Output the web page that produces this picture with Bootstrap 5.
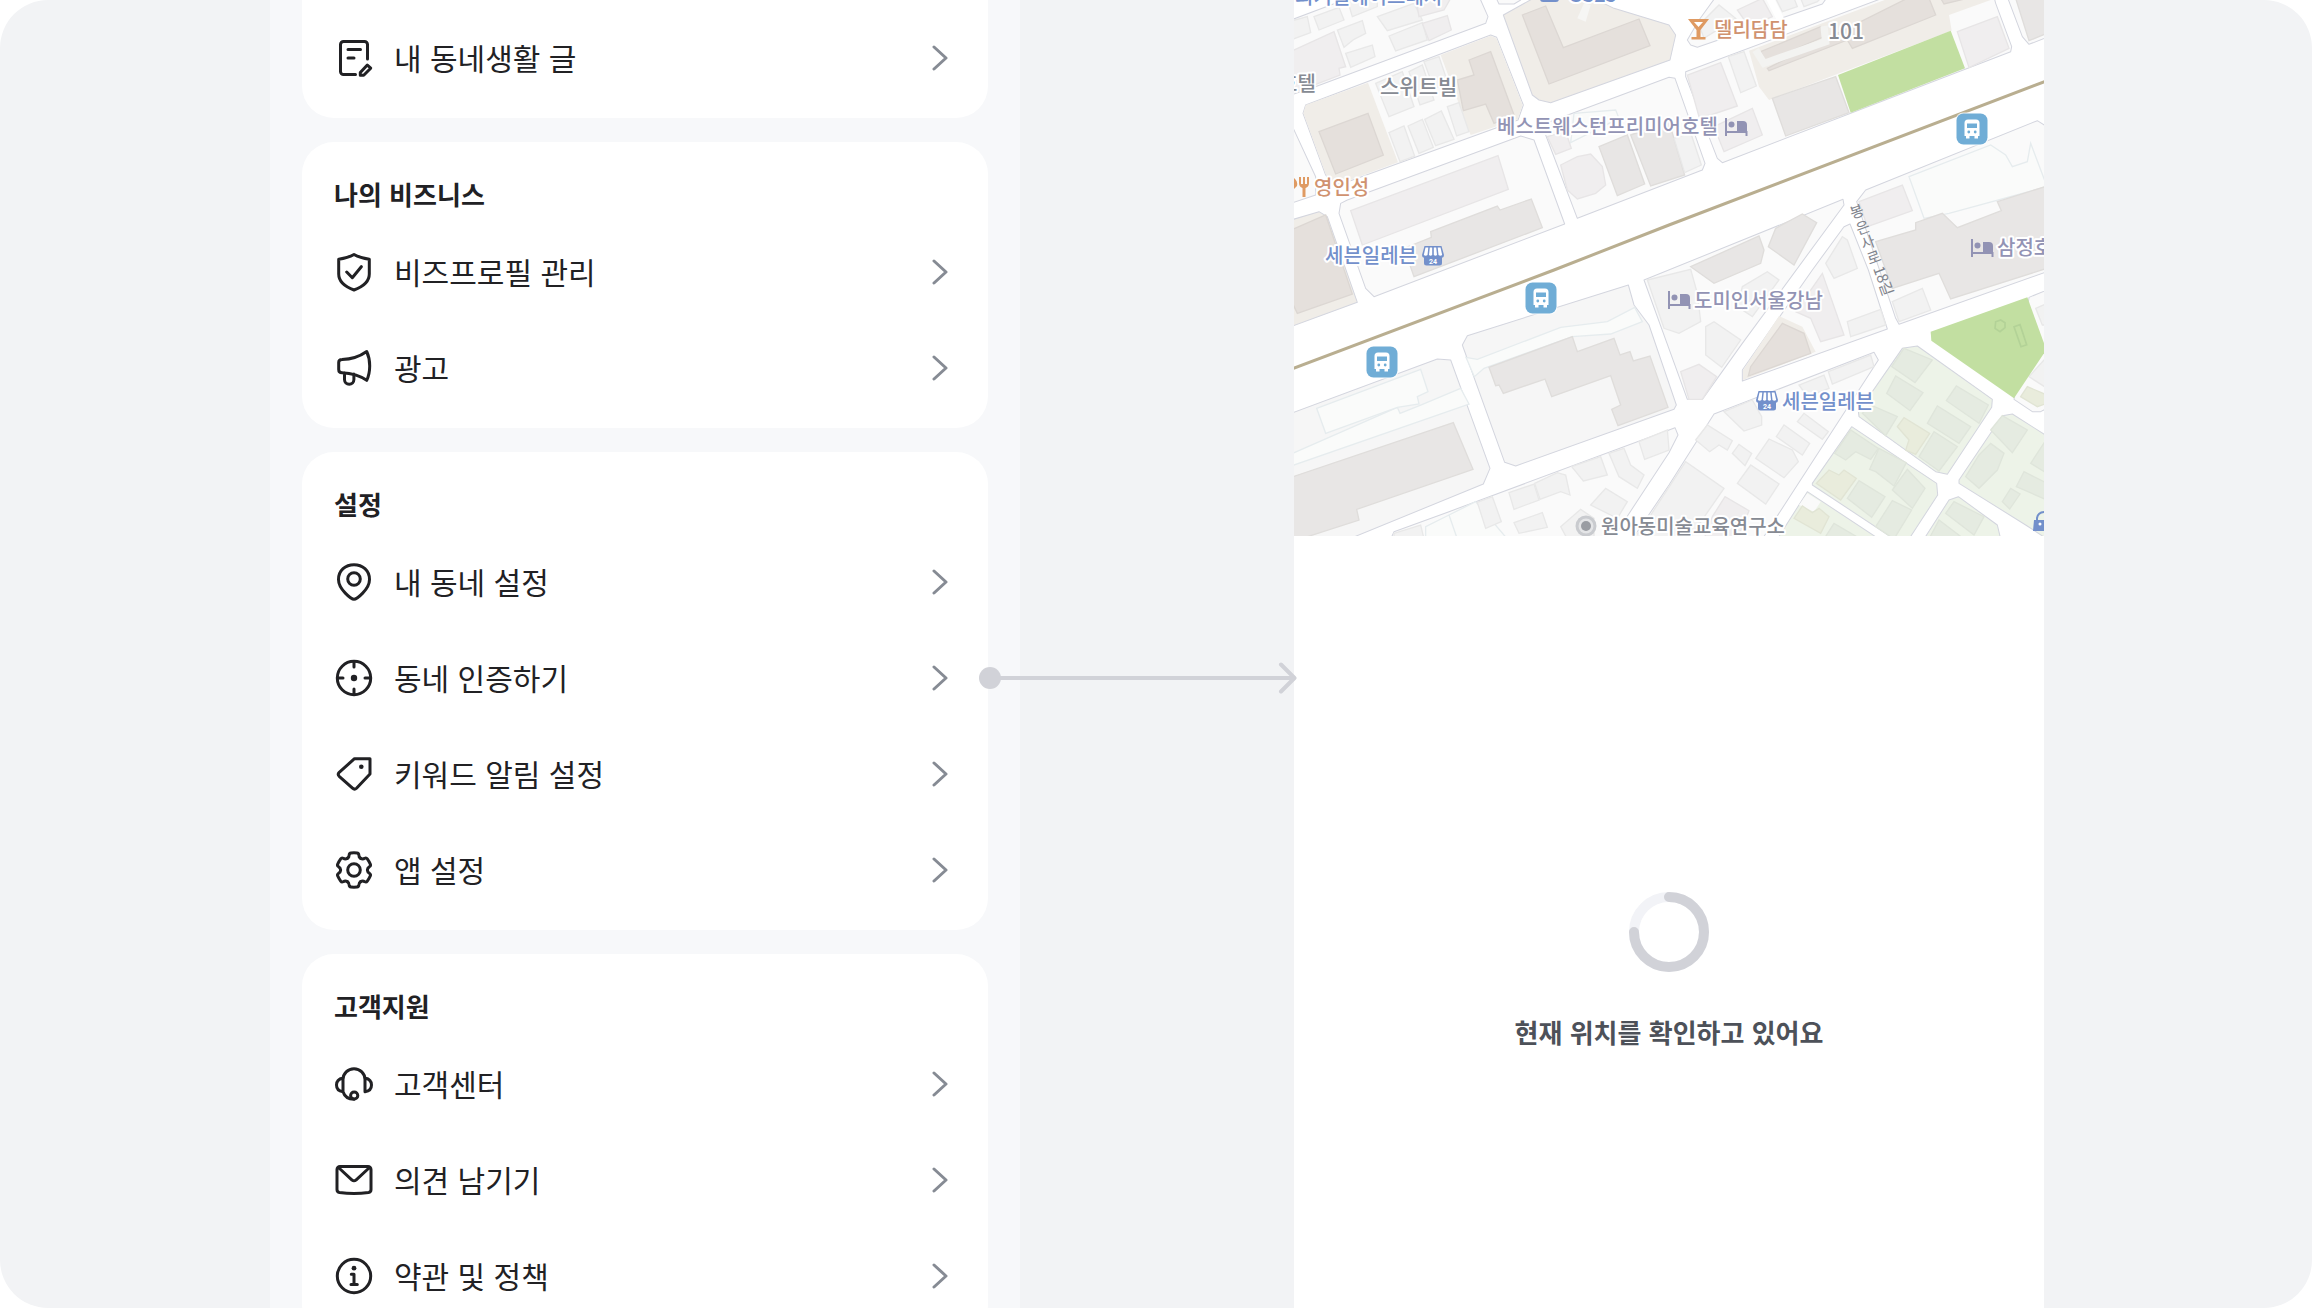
<!DOCTYPE html>
<html lang="ko">
<head>
<meta charset="utf-8">
<meta name="viewport" content="width=device-width, initial-scale=1">
<title>동네 인증하기</title>
<link href="https://cdn.jsdelivr.net/npm/bootstrap@5.3.0/dist/css/bootstrap.min.css" rel="stylesheet">
<style>
  body { background: #fff; font-family: "Noto Sans CJK KR", "Noto Sans", sans-serif; color: #212124; }
  .stage { height: 100vh; background: #f2f3f5; border-radius: 48px; padding: 0 268px 0 270px; column-gap: 274px; grid-template-columns: minmax(0, 1fr) minmax(0, 1fr); }
  .phone-menu { background: #f7f8fa; padding: 0 32px; gap: 24px; }
  .menu-group { background: #fff; border-radius: 32px; padding: 12px 0; }
  .menu-group.continued { border-radius: 0 0 32px 32px; padding-top: 10px; }
  .menu-title { font-size: 26px; line-height: 40px; font-weight: 700; margin: 0; padding: 20px 32px 10px; }
  .menu-row { height: 96px; padding: 0 40px 0 32px; gap: 20px; color: #212124; font-size: 30px; line-height: 40px; text-decoration: none; position: relative; }
  .menu-label { padding-bottom: 3px; }
  .menu-icon { width: 40px; height: 40px; fill: none; stroke: #212124; stroke-width: 3; stroke-linecap: round; stroke-linejoin: round; flex: none; }
  .menu-icon .dot { fill: #212124; stroke: none; }
  .chevron { width: 16px; height: 28px; fill: none; stroke: #868b94; stroke-width: 3; stroke-linecap: round; stroke-linejoin: round; flex: none; }
  .connector { position: absolute; left: 100%; top: 50%; width: 320px; height: 32px; margin: -16px 0 0 -10px; z-index: 2; pointer-events: none; }
  .phone-location { background: #fff; }
  .map-view { width: 100%; height: 536px; display: block; flex: none; }
  .locating { padding-top: 356px; gap: 40px; }
  .loader { width: 80px; height: 80px; }
  .locating-text { font-size: 26px; line-height: 40px; font-weight: 700; color: #4d5159; margin: 0; }
  .street { fill: #fff; }
  .lot { fill: #fafafa; stroke: #d3d5de; stroke-width: 3; stroke-linejoin: round; }
  .lot-grey { fill: #f6f6f6; }
  .lot-green { fill: #edf3e8; }
  .lot-beige { fill: #f0ede8; }
  .beige { fill: #f0ede8; }
  .house path { stroke: #e8e8e8; stroke-width: 4; fill: #f2f2f2; }
  .pinkish path { stroke: #e7e5e6; stroke-width: 4; fill: #f0eeef; }
  .solid path { stroke: #dfdddb; stroke-width: 4; fill: #e8e6e5; }
  .warm path { stroke: #dcd7d3; stroke-width: 4; fill: #e5e0dc; }
  .garden path { stroke: #dfe5db; stroke-width: 4; fill: #e5ebe1; }
  .sunny path { stroke: #e1e4d4; stroke-width: 4; fill: #e9ecdc; }
  .lane { fill: #fafbfa; stroke: #e6ecee; stroke-width: 4; }
  .map-label { font-size: 20px; font-weight: 500; stroke: #fff; stroke-width: 4px; stroke-linejoin: round; paint-order: stroke; }
  .map-label.large { font-size: 21px; }
  .place { fill: #868a93; }
  .hotel { fill: #9293b4; }
  .food { fill: #d0926f; }
  .store { fill: #7390cb; }
  .road-name { font-size: 15px; fill: #7f838c; text-anchor: middle; }
  .tiny-24 { font: 700 7px Roboto, sans-serif; fill: #fff; text-anchor: middle; }
</style>
</head>
<body>
<main class="stage d-grid overflow-hidden">

  <section class="phone-menu d-flex flex-column">
    <nav class="menu-group continued">
      <a class="menu-row d-flex align-items-center" href="#">
        <svg class="menu-icon" viewBox="0 0 40 40"><path d="M33.500 21V6.500a3 3 0 0 0-3-3h-21a3 3 0 0 0-3 3v27a3 3 0 0 0 3 3h12M14 11.500h12.500M14 20h6M26.300 34.500l7-7.500 3.400 3.200-7 7.100h-3.400z"/></svg>
        <span class="menu-label flex-grow-1">내 동네생활 글</span>
        <svg class="chevron" viewBox="0 0 16 28"><path d="M2 3l12 11-12 11"/></svg>
      </a>
    </nav>

    <nav class="menu-group">
      <h2 class="menu-title">나의 비즈니스</h2>
      <a class="menu-row d-flex align-items-center" href="#">
        <svg class="menu-icon" viewBox="0 0 40 40"><path d="M20 2.500C24 4.800 29.500 6.500 35.300 7.300V22c0 8-7 13-15.300 16C11.700 35 4.700 30 4.700 22V7.300C10.500 6.500 16 4.800 20 2.500zM12.700 20l5.600 5.700 9-11"/></svg>
        <span class="menu-label flex-grow-1">비즈프로필 관리</span>
        <svg class="chevron" viewBox="0 0 16 28"><path d="M2 3l12 11-12 11"/></svg>
      </a>
      <a class="menu-row d-flex align-items-center" href="#">
        <svg class="menu-icon" viewBox="0 0 40 40"><path d="M32.700 3.500C25 9 16 11.300 8 11.500c-2 0-3.300 1-3.300 3v7c0 2 1.300 3.200 3.300 3.200 8 .3 17 2.300 24.700 7.600C36.700 24 36.700 12 32.700 3.500zM10.500 25v6.500a4.700 4.700 0 0 0 9.400 0V26"/></svg>
        <span class="menu-label flex-grow-1">광고</span>
        <svg class="chevron" viewBox="0 0 16 28"><path d="M2 3l12 11-12 11"/></svg>
      </a>
    </nav>

    <nav class="menu-group">
      <h2 class="menu-title">설정</h2>
      <a class="menu-row d-flex align-items-center" href="#">
        <svg class="menu-icon" viewBox="0 0 40 40"><path d="M20 37.300C17.500 37.300 4.500 27.500 4.500 17.500 4.500 8.500 11.500 2.700 20 2.700s15.500 5.800 15.500 14.800c0 10-13 19.800-15.500 19.800z"/><circle cx="20" cy="17" r="6.300"/></svg>
        <span class="menu-label flex-grow-1">내 동네 설정</span>
        <svg class="chevron" viewBox="0 0 16 28"><path d="M2 3l12 11-12 11"/></svg>
      </a>
      <a class="menu-row d-flex align-items-center" href="#">
        <svg class="menu-icon" viewBox="0 0 40 40"><circle cx="20" cy="20" r="16.700"/><path d="M20 3.500v5.500M20 31v5.500M3.500 20h5.500M31 20h5.500"/><circle class="dot" cx="20" cy="20" r="3.200"/></svg>
        <span class="menu-label flex-grow-1">동네 인증하기</span>
        <svg class="chevron" viewBox="0 0 16 28"><path d="M2 3l12 11-12 11"/></svg>
        <svg class="connector" viewBox="0 0 320 32"><circle cx="12" cy="16" r="11" fill="#d1d2d8"/><path d="M12 16h303M303 2.500l13.500 13.500-13.500 13.500" fill="none" stroke="#d1d2d8" stroke-width="4" stroke-linecap="round" stroke-linejoin="round"/></svg>
      </a>
      <a class="menu-row d-flex align-items-center" href="#">
        <svg class="menu-icon" viewBox="0 0 40 40"><path d="M20.500 4.700H36V20L22.500 34.200c-1.300 1.300-2.600 1.300-4 0L5.200 22.300c-1.200-1.300-1.200-2.800 0-4z"/><circle class="dot" cx="27.300" cy="12.700" r="2.300"/></svg>
        <span class="menu-label flex-grow-1">키워드 알림 설정</span>
        <svg class="chevron" viewBox="0 0 16 28"><path d="M2 3l12 11-12 11"/></svg>
      </a>
      <a class="menu-row d-flex align-items-center" href="#">
        <svg class="menu-icon" viewBox="0 0 40 40">
          <defs><path id="tooth" d="M13.300 8.400Q15.300 7.200 15.200 4.800Q15.300 3.100 17 2.900Q20 2.600 23 2.900Q24.700 3.100 24.800 4.800Q24.700 7.200 26.700 8.400"/></defs>
          <use href="#tooth"/><use href="#tooth" transform="rotate(60 20 20)"/><use href="#tooth" transform="rotate(120 20 20)"/><use href="#tooth" transform="rotate(180 20 20)"/><use href="#tooth" transform="rotate(240 20 20)"/><use href="#tooth" transform="rotate(300 20 20)"/>
          <circle cx="20" cy="20" r="6.300"/></svg>
        <span class="menu-label flex-grow-1">앱 설정</span>
        <svg class="chevron" viewBox="0 0 16 28"><path d="M2 3l12 11-12 11"/></svg>
      </a>
    </nav>

    <nav class="menu-group">
      <h2 class="menu-title">고객지원</h2>
      <a class="menu-row d-flex align-items-center" href="#">
        <svg class="menu-icon" viewBox="0 0 40 40"><path d="M9 27.500V15.500a11 10.800 0 0 1 22 0v12M9 14c-4 .8-6.500 3.500-6.500 7s2.500 6.200 6.500 6.800c1.500 4.500 5.500 7.500 11 7.500M31 14c4 .8 6.500 3.500 6.500 7s-2.500 6.200-6.500 6.800"/><circle cx="20.200" cy="31.500" r="3.600"/></svg>
        <span class="menu-label flex-grow-1">고객센터</span>
        <svg class="chevron" viewBox="0 0 16 28"><path d="M2 3l12 11-12 11"/></svg>
      </a>
      <a class="menu-row d-flex align-items-center" href="#">
        <svg class="menu-icon" viewBox="0 0 40 40"><path d="M6 6.500h28a3 3 0 0 1 3 3v20a3 3 0 0 1-2.500 3Q20 34.500 5.500 32.500a3 3 0 0 1-2.500-3v-20a3 3 0 0 1 3-3zM5 8l12.800 11.800q2.200 2 4.400 0L35 8"/></svg>
        <span class="menu-label flex-grow-1">의견 남기기</span>
        <svg class="chevron" viewBox="0 0 16 28"><path d="M2 3l12 11-12 11"/></svg>
      </a>
      <a class="menu-row d-flex align-items-center" href="#">
        <svg class="menu-icon" viewBox="0 0 40 40"><circle cx="20" cy="20" r="16.700"/><path d="M17.300 18.300H20V28.500M17 28.500h6.300"/><circle class="dot" cx="20" cy="12.200" r="2.400"/></svg>
        <span class="menu-label flex-grow-1">약관 및 정책</span>
        <svg class="chevron" viewBox="0 0 16 28"><path d="M2 3l12 11-12 11"/></svg>
      </a>
    </nav>
  </section>

  <section class="phone-location d-flex flex-column">
    <svg class="map-view" viewBox="0 0 750 536" preserveAspectRatio="xMidYMid slice" role="img" aria-label="지도">
      <defs>
        <g id="bus"><rect x="-16.500" y="-16.500" width="33" height="33" rx="8" fill="#fff" opacity=".8"/><rect x="-15.500" y="-15.500" width="31" height="31" rx="7" fill="#70add6"/><path d="M-7.500-6q0-3.500 3.500-3.500h8q3.500 0 3.500 3.500V7h-1.500v2.500h-3.500V7h-5v2.500H-6V7h-1.500z" fill="#fff"/><path d="M-5-5.500h10v4.500H-5z" fill="#70add6"/><circle cx="-3.200" cy="3" r="1.400" fill="#70add6"/><circle cx="3.200" cy="3" r="1.400" fill="#70add6"/></g>
        <g id="bed" fill="none" stroke="#9293b4" stroke-width="2"><path d="M-10-9V9M-10 5H10.500V9" /><path d="M1-6h6q4 0 4 4v7H1z" fill="#9293b4" stroke="none"/><circle cx="-4.500" cy="-2.500" r="3" fill="#9293b4" stroke="none"/></g>
        <g id="shop"><path d="M-8.500-10h17l2.500 9q0 2.500-2 2.800V7q0 2.500-2.500 2.500h-13Q-9 9.500-9 7V1.800q-2-.3-2-2.800z" fill="#7390cb"/><path d="M-7.500-8.500h2.800l-.8 7.500q-1.800 1.500-3.700 0zM-3.200-8.500h2.400v7.500q-1.700 1.500-3.200 0zM.8-8.500h2.400l.8 7.500q-1.500 1.500-3.200 0zM4.700-8.500h2.800l1.700 7.500q-1.900 1.500-3.700 0z" fill="#fff"/><text class="tiny-24" y="7.500">24</text></g>
      </defs>
      <rect class="street" width="750" height="536"/>
      <g transform="scale(.33334)">
        <!-- north-west blocks -->
        <path class="lot" d="M-9 60L150 0V-9H560V0L582 50 575 70 60 262-9 285z"/>
        <g class="house"><path d="M-5 62L40 50 50 98-5 118z"/><path d="M60 50L135 22 150 60 75 90z"/><path d="M130 90L205 62 215 100 180 118 150 142z"/><path d="M155 160L235 135 243 170 170 202z"/><path d="M250 50L360 10 385 60 280 92z"/><path d="M285 108L385 68 400 120 305 153z"/><path d="M160 0H250V20L175 50z"/></g>
        <g class="pinkish"><path d="M-5 152L120 95 155 200 135 205 138 225-5 280z"/><path d="M385 70L460 47 472 90 405 122z"/><path d="M365-5H470L450 30 375 50z"/></g>
        <path class="lot" d="M-9 370L65 530V585L-9 610z"/>
        <path class="lot" d="M27 340L35 315 590 105 608 112 688 315 672 360 120 560 95 525z"/>
        <path class="beige" d="M35 315L222 248 312 487 120 558 95 523 28 340zM440 165L590 107 607 114 686 315 671 358 530 405z"/>
        <g class="warm"><path d="M75 395L222 340 268 465 125 522z"/><path d="M525 180L590 155 660 345 600 370 575 312 508 332 490 240 540 225z"/></g>
        <g class="house"><path d="M245 250L325 215 360 320 285 350z"/><path d="M345 215L385 195 420 300 378 315z"/><path d="M390 185L435 170 462 250 420 265z"/><path d="M285 398L330 378 362 468 318 485z"/><path d="M342 378L385 358 418 442 375 460z"/><path d="M392 358L442 333 480 418 425 437z"/><path d="M460 320L495 308 525 395 488 408z"/></g>
        <path class="lot lot-beige" d="M628 45L725-9H890L960 25 1125 75 1145 105 1128 180 770 308 735 300 715 285z"/>
        <path class="lot" d="M605-9H680V0L660 12H615z"/>
        <g class="warm"><path d="M685 45L755 18 808 143 1035 57 1068 137 765 252z"/></g>
        <path d="M850 55L870 10 890 15 875 65z" fill="#f6f6f4"/>
        <path class="lot" d="M755 370L1125 232 1143 235 1233 490 1225 510 850 655 755 405z"/>
        <path class="lane" d="M840 340L965 330 975 355 830 428z"/>
        <g class="pinkish"><path d="M760 410L815 395 832 445 785 463z"/><path d="M800 495L850 470 890 462 925 500 935 555 905 580 850 597 820 570z"/></g>
        <g class="solid"><path d="M915 440L1000 405 1052 552 970 587z"/><path d="M1010 405L1125 365 1172 525 1070 558z"/></g>
        <g class="house"><path d="M1140 415L1190 398 1222 495 1172 518z"/></g>
        <path class="lot" d="M140 610L160 600 680 408 720 420 812 672 240 890 215 865 135 640z"/>
        <g class="pinkish"><path d="M170 632L612 467 643 568 205 735z"/></g>
        <g class="solid"><path d="M410 695L610 618 618 630 712 597 745 683 360 830 330 745 412 712z"/></g>
        <path class="lot lot-beige" d="M-9 660L75 635 100 650 190 907-9 980z"/>
        <g class="warm"><path d="M-9 690L95 645 175 882 10 940-9 900z"/></g>
        <!-- north-east blocks -->
        <path class="lot" d="M1180 120L1215 60 1265-9H1600L1585 12 1470 52 1210 142 1190 135z"/>
        <path d="M1428-5L1460 60" stroke="#fff" stroke-width="22"/>
        <g class="house"><path d="M1215 75L1275 15 1325 55 1230 115z"/><path d="M1445-5H1500L1510 20 1465 35z"/><path d="M1520-5H1580L1570 5 1530 20z"/></g>
        <g class="pinkish"><path d="M1330 30L1405-5 1435 50 1365 80z"/></g>
        <path class="lot" d="M1175 215L1775-9H2100L2105 10 2153 140 2150 155 1285 488 1270 475 1175 230z"/>
        <path class="beige" d="M1365 152L1780-3H2090V0L1965 45 1973 92 1630 222 1425 300 1395 260z"/>
        <g class="warm"><path d="M1400 155L1580 80 1590 110 1415 185z"/><path d="M1420 205L1840-5H1905L1925 45 1675 145 1660 120 1425 212z"/><path d="M1940-5H2020L1950 12z"/></g>
        <path d="M1385 150L1410 190 1595 125 1590 78" fill="none" stroke="#f3f3f1" stroke-width="22"/>
        <g class="pinkish"><path d="M1180 225L1280 188 1330 318 1250 345 1215 350z"/><path d="M1260 380L1375 325 1405 405 1290 455z"/><path d="M1990 95L2110 50 2145 145 2025 203z"/></g>
        <g class="house"><path d="M1303 170L1350 155 1387 258 1340 278z"/></g>
        <g class="solid"><path d="M1435 295L1625 230 1665 338 1475 408z"/></g>
        <path d="M1632 225L1970 92 2013 205 1670 338z" fill="#c2dfa1"/>
        <path class="lot" d="M2140-9L2185 110 2205 133 2259 112V-9z"/>
        <g class="solid"><path d="M2165-5L2205 122 2259 100V-5z"/></g>
        <!-- boulevard centre line -->
        <path d="M-9 1108L780 810 1125 675 2259 242" fill="none" stroke="#b9ae90" stroke-width="9"/>
        <!-- south-west blocks -->
        <path class="lot lot-grey" d="M-9 1240L430 1077 470 1080 588 1405 568 1452 165 1617H-9z"/>
        <path class="lane" d="M-9 1362L310 1222 318 1240 380 1215 500 1165 525 1212-9 1398z"/>
        <path class="lane" d="M68 1225L380 1108 402 1175 370 1190 375 1212 310 1222 95 1300z"/>
        <g class="solid"><path d="M-9 1432L478 1268 537 1408 188 1528 195 1560-9 1626z"/></g>
        <path class="lot lot-grey" d="M505 1035L520 1007 1003 855 1020 915 1065 975 1147 1215 1140 1228 665 1398 632 1387z"/>
        <path class="lane" d="M516 1072L550 1078 800 982 940 965 1022 922 1045 965 950 1002 835 1010 570 1105 541 1130z"/>
        <g class="solid"><path d="M585 1102L835 1010 850 1055 960 1015 978 1065 1008 1055 1018 1083 1068 1068 1122 1222 972 1277 953 1228 980 1215 950 1127 773 1190 753 1137 628 1180 615 1155 605 1157z"/></g>
        <path class="lot" d="M1050 840L1647 598 1650 615 1345 1030 1225 1198H1180z"/>
        <g class="solid"><path d="M1190 800L1395 708 1410 750 1400 790 1260 850z"/><path d="M1445 685L1525 642 1568 668 1500 795 1423 740z"/></g>
        <g class="house"><path d="M1060 840L1190 808 1210 880 1220 965 1155 1000 1110 985z"/><path d="M1235 980L1260 965 1340 1020 1283 1102 1235 1065z"/><path d="M1345 860L1420 815 1455 840 1375 950 1330 920z"/></g>
        <g class="pinkish"><path d="M1160 1115L1215 1093 1268 1130 1225 1198H1185z"/></g>
        <path class="lot" d="M1650 680L1668 672 1723 810 1780 987 1345 1143V1110L1555 810z"/>
        <path class="beige" d="M1455 948L1525 980 1565 1055 1347 1140V1110z"/>
        <g class="warm"><path d="M1465 970L1530 1000 1550 1060 1363 1128 1370 1100z"/></g>
        <g class="pinkish"><path d="M1505 935L1585 820 1650 1005 1580 1025 1550 955z"/></g>
        <g class="house"><path d="M1595 790L1645 710 1660 720 1690 805 1620 835z"/><path d="M1660 965L1760 928 1775 975 1670 1010z"/></g>
        <path class="lot" d="M1688 605L1715 570 2230 362 2259 380V815L1815 973 1805 955z"/>
        <path class="lane" d="M1845 530L2090 435 2135 465 2155 500 2200 485 2210 430 2259 560 1965 640 1890 655z"/>
        <g class="pinkish"><path d="M1695 605L1825 555 1855 632 1720 680z"/></g>
        <g class="solid"><path d="M1745 725L1865 690V668L1945 640 1990 683 2122 632 2110 605 2259 558V805L1970 897 1935 820 1795 865z"/></g>
        <g class="house"><path d="M1795 905L1885 865 1910 930 1815 965z"/></g>
        <!-- southern housing -->
        <path class="lot" d="M1260 1242L1740 1057 1753 1080 1405 1617H1015L1125 1455z"/>
        <path class="lot" d="M290 1617L300 1595 465 1535 1125 1290 1143 1283 1152 1305 1125 1358 955 1617z"/>
        <path class="lane" d="M395 1617V1580L465 1545 545 1505 640 1617M465 1545L490 1617"/>
        <g class="house"><path d="M645 1478L720 1452 735 1500 660 1528z"/><path d="M722 1450L790 1418 815 1425 828 1485 800 1475 738 1498z"/><path d="M833 1400L920 1370 940 1425 868 1443z"/><path d="M945 1360L990 1345 1010 1395 1050 1425 1030 1465 975 1430z"/><path d="M1035 1325L1120 1290 1125 1350 1052 1378z"/><path d="M890 1515L935 1465 1000 1505 970 1555z"/><path d="M660 1568L745 1538 760 1582 675 1600z"/><path d="M550 1507L595 1490 622 1565 575 1585z"/><path d="M800 1580L860 1528 900 1555V1617H820z"/><path d="M300 1600L380 1575 390 1617H300z"/>
          <path d="M1205 1320L1240 1275 1315 1322 1300 1350 1275 1335 1247 1355z"/><path d="M1315 1360L1335 1333 1373 1360 1353 1397z"/><path d="M1385 1375L1425 1317 1495 1350 1513 1385 1470 1433z"/><path d="M1447 1310L1470 1275 1547 1330 1525 1365z"/><path d="M1510 1265L1530 1240 1603 1295 1585 1318z"/><path d="M1330 1450L1370 1395 1455 1452 1415 1512z"/><path d="M1290 1235L1375 1200 1403 1250V1275L1350 1293z"/><path d="M1070 1545L1175 1385 1290 1465 1185 1617H1020z"/><path d="M1603 1115L1730 1065 1740 1100 1615 1152z"/><path d="M1515 1155L1590 1125 1605 1165 1540 1190z"/></g>
        <g class="pinkish"><path d="M1255 1550L1293 1490 1365 1532 1330 1617H1230z"/></g>
        <path class="lot lot-green" d="M1825 1045L1870 1038 2095 1198 2093 1222 1960 1423 1925 1415 1695 1250 1693 1235z"/>
        <g class="garden"><path d="M1793 1100L1830 1045 1915 1080 1863 1148z"/><path d="M1778 1180L1805 1128 1887 1178 1848 1232z"/><path d="M1957 1202L1987 1158 2083 1215 2055 1270z"/><path d="M1900 1270L1930 1218 2030 1280 1995 1330z"/><path d="M1705 1240L1730 1215 1810 1250 1775 1307z"/><path d="M1875 1370L1920 1295 1990 1340 1935 1413z"/></g>
        <g class="sunny"><path d="M1810 1280L1830 1253 1907 1300 1865 1363 1835 1350 1845 1320z"/></g>
        <path class="lot lot-green" d="M1673 1280L1928 1450 1931 1485 1845 1617H1800L1555 1455V1450z"/>
        <g class="garden"><path d="M1622 1360L1670 1290 1753 1345 1730 1378 1685 1355 1655 1380z"/><path d="M1727 1408L1755 1345 1837 1388 1800 1458 1745 1415z"/><path d="M1660 1495L1695 1442 1773 1490 1733 1552z"/><path d="M1795 1470L1840 1408 1893 1465 1855 1525z"/><path d="M1745 1580L1795 1502 1853 1530 1800 1617z"/></g>
        <g class="sunny"><path d="M1567 1450L1605 1410 1635 1425 1650 1410 1687 1435 1640 1500z"/></g>
        <path class="lot lot-green" d="M1540 1475L1755 1617H1450z"/>
        <path d="M1540 1480L1580 1505 1560 1535 1515 1515z" fill="#fafafa"/>
        <g class="sunny"><path d="M1500 1555L1525 1518 1555 1538 1575 1525 1605 1550 1580 1600z"/></g>
        <g class="garden"><path d="M1590 1617L1620 1570 1700 1617z"/></g>
        <path class="lot lot-green" d="M1965 1500L1993 1490 2110 1575 2120 1617H1890z"/>
        <g class="garden"><path d="M1955 1540L1980 1505 2070 1550 2040 1605z"/><path d="M1905 1617L1935 1560 2010 1617z"/></g>
        <path class="lot lot-green" d="M2125 1247L2155 1242 2259 1308V1617L2195 1575 1995 1450V1440z"/>
        <g class="garden"><path d="M2090 1290L2125 1247 2200 1290 2155 1358z"/><path d="M2015 1430L2055 1365 2090 1330 2130 1360 2110 1410 2055 1465z"/><path d="M2210 1390L2259 1315V1420z"/><path d="M2167 1460L2190 1415 2259 1450V1500z"/><path d="M2125 1505L2150 1465 2178 1482 2147 1527z"/></g>
        <path class="lot" d="M2205 892L2259 870V1225L2240 1235 2215 1235 2160 1198z"/>
        <g class="sunny"><path d="M2180 1190L2200 1160 2259 1185V1210L2230 1220z"/></g>
        <g class="house"><path d="M2225 925L2259 910V975H2245z"/><path d="M2205 1130L2259 1070V1165z"/></g>
        <path d="M1910 995L2200 892 2250 1030V1060L2160 1195 1912 1022z" fill="#c2dfa1"/>
        <path d="M2105 965l15-5 13 8v15l-15 12-15-10zM2160 980l18-6 20 60-17 6z" fill="none" stroke="#b3d297" stroke-width="5"/>
      </g>

      <text class="map-label store" x="1" y="4">되기필에이트레서</text>
      <path d="M246-8h19v7q0 3-3 3h-13q-3 0-3-3z" fill="#7390cb"/>
      <text class="map-label store" x="274" y="2">GS25</text>
      <text class="map-label place" x="-15" y="91">호텔</text>
      <text class="map-label place large" x="86" y="94">스위트빌</text>
      <text class="map-label place large" x="534" y="39">101</text>
      <path d="M394 19h21l-8.500 11v7h5v2.500h-14V37h5v-7z" fill="#df9a62"/><path d="M400 22h9l-4.500 5z" fill="#fff"/>
      <text class="map-label food" x="420" y="37">델리담담</text>
      <path d="M0 178q4 3 3 8l-3 3zM5 177v6q0 4 3.500 5v9h3v-9q3.500-1 3.500-5v-6h-2v7h-2v-7h-2v7h-2v-7z" fill="#df9a62"/>
      <text class="map-label food" x="20" y="195">영인성</text>
      <text class="map-label hotel" x="203" y="134">베스트웨스턴프리미어호텔</text>
      <use href="#bed" transform="translate(442 127)"/>
      <text class="map-label store" x="31" y="263">세븐일레븐</text>
      <use href="#shop" transform="translate(139 256)"/>
      <use href="#bed" transform="translate(385 300)"/>
      <text class="map-label hotel" x="400" y="308">도미인서울강남</text>
      <use href="#bed" transform="translate(688 248)"/>
      <text class="map-label hotel" x="703" y="255">삼정호텔</text>
      <use href="#shop" transform="translate(473 401)"/>
      <text class="map-label store" x="488" y="409">세븐일레븐</text>
      <circle cx="292" cy="526" r="10.500" fill="#c9cbcf"/><circle cx="292" cy="526" r="7.500" fill="#e4e5e7"/><circle cx="292" cy="526" r="5" fill="#9a9da3"/>
      <text class="map-label place" x="307" y="534">원아동미술교육연구소</text>
      <g class="road-name">
        <text transform="translate(563 212) rotate(-20)" y="5">봉</text><text transform="translate(569 228) rotate(-20)" y="5">은</text><text transform="translate(574 243) rotate(-20)" y="5">사</text><text transform="translate(580 258) rotate(-20)" y="5">로</text><text transform="translate(589 281) rotate(70)" y="5">18길</text>
      </g>
      <path d="M740 520h12v11h-13z" fill="#7390cb"/><path d="M743 521v-3q1-6 8-6" fill="none" stroke="#7390cb" stroke-width="2"/><circle cx="746" cy="524" r="1.500" fill="#fff"/>
      <use href="#bus" transform="translate(678 129)"/><use href="#bus" transform="translate(247 298)"/><use href="#bus" transform="translate(88 362)"/>
    </svg>
    <div class="locating d-flex flex-column align-items-center" role="status">
      <svg class="loader" viewBox="0 0 80 80" fill="none" stroke-width="10" stroke-linecap="round"><circle cx="40" cy="40" r="35" stroke="#f2f3f7"/><path d="M40 5A35 35 0 1 1 5 40" stroke="#d1d2d8"/></svg>
      <p class="locating-text">현재 위치를 확인하고 있어요</p>
    </div>
  </section>
</main>
<script src="https://cdn.jsdelivr.net/npm/bootstrap@5.3.0/dist/js/bootstrap.bundle.min.js"></script>
</body>
</html>
